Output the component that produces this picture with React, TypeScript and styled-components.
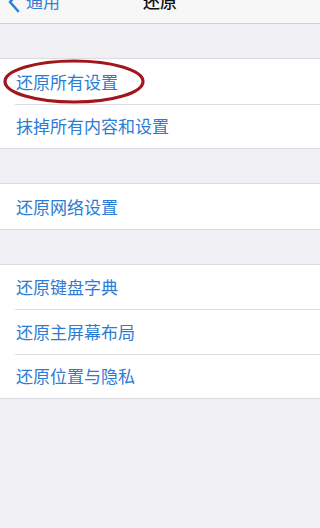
import styled, { createGlobalStyle } from 'styled-components';

const GlobalStyle = createGlobalStyle`
    html, body {
        margin: 0;
        padding: 0;
        background: #efeff4;
        font-family: 'Noto Sans CJK SC', 'Noto Sans', sans-serif;
    }
`;

const Page = styled.div`
    width: 320px;
    height: 528px;
    overflow: hidden;
    background: #efeff4;
`;

const NavBar = styled.div`
    height: 23px;
    background: #f7f7f8;
    border-bottom: 1px solid #cfcfd3;
    display: flex;
    align-items: flex-start;
    justify-content: center;
    position: relative;
    overflow: hidden;
`;

const BackButton = styled.div`
    position: absolute;
    left: 8px;
    top: -11px;
    display: flex;
    align-items: center;
    gap: 6px;
    color: #2f7fd6;
    font-size: 17px;
    line-height: 24px;
`;

const Chevron = styled.svg`
    margin-top: 2px;
`;

const Title = styled.div`
    margin-top: -11px;
    font-size: 17px;
    line-height: 24px;
    color: #111;
    font-weight: 500;
`;

const Group = styled.div`
    margin-top: 34px;
    background: #fff;
    border-top: 1px solid #dcdce0;
    border-bottom: 1px solid #dcdce0;
    position: relative;
`;

const Row = styled.div`
    height: 44.5px;
    padding-left: 16px;
    display: flex;
    align-items: center;
    position: relative;
    color: #2c7cd4;
    font-size: 17px;

    & + &::before {
        content: '';
        position: absolute;
        left: 15px;
        right: 0;
        top: 0;
        height: 1px;
        background: #dedee2;
    }
`;

const Highlight = styled.svg`
    position: absolute;
    left: 2px;
    top: 0px;
    pointer-events: none;
`;

const groups = [
    ['还原所有设置', '抹掉所有内容和设置'],
    ['还原网络设置'],
    ['还原键盘字典', '还原主屏幕布局', '还原位置与隐私'],
];

const App = () => {
    return (
        <Page>
            <GlobalStyle />
            <NavBar>
                <BackButton>
                    <Chevron width="12" height="22" viewBox="0 0 12 22">
                        <path d="M10 2 L2 11 L10 20" fill="none" stroke="#2f7fd6" strokeWidth="2.6" strokeLinecap="round" strokeLinejoin="round" />
                    </Chevron>
                    <span>通用</span>
                </BackButton>
                <Title>还原</Title>
            </NavBar>

            {groups.map((items, gi) => (
                <Group key={gi}>
                    {gi === 0 && (
                        <Highlight width="144" height="46" viewBox="0 0 144 46">
                            <ellipse cx="72" cy="22.5" rx="69" ry="20.5" fill="none" stroke="#a3151c" strokeWidth="3.2" />
                        </Highlight>
                    )}
                    {items.map((item) => (
                        <Row key={item}>{item}</Row>
                    ))}
                </Group>
            ))}
        </Page>
    );
};

export default App;
